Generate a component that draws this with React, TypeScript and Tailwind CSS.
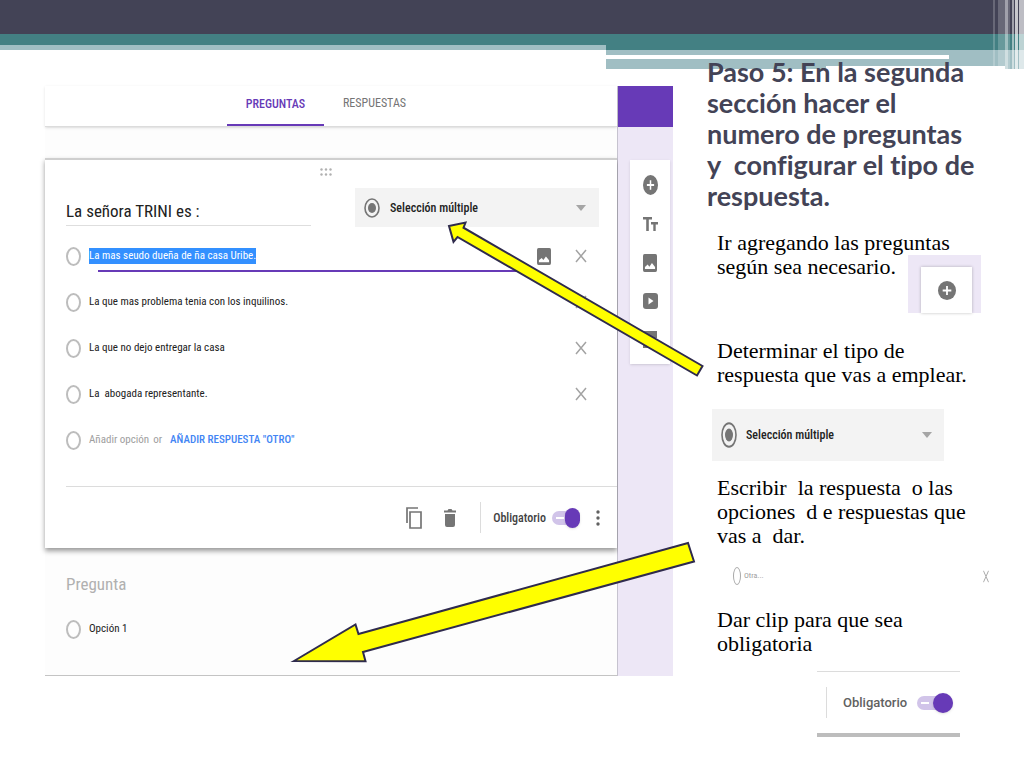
import React, { useState } from "react";

const condensed = "font-['Roboto_Condensed','Liberation_Sans_Narrow',Roboto,sans-serif]";
const serif = "font-['Liberation_Serif',serif]";

function PlusIcon({ className }: { className: string }) {
  return (
    <svg viewBox="0 0 20 20" preserveAspectRatio="none" className={className} aria-hidden="true">
      <ellipse cx="10" cy="10" rx="10" ry="10" fill="#757575" />
      <path d="M10 5.2v9.6M5.2 10h9.6" stroke="#fff" strokeWidth="2" />
    </svg>
  );
}

function ImageIcon({ className }: { className: string }) {
  return (
    <svg viewBox="0 0 18 18" preserveAspectRatio="none" className={className} aria-hidden="true">
      <rect width="18" height="18" rx="2" fill="#757575" />
      <path d="M2.500 15v-2L6 10.500l2.200 2.200L11.500 9l4 4v2z" fill="#fff" />
    </svg>
  );
}

function CrossIcon({ className }: { className: string }) {
  return (
    <svg viewBox="0 0 12 14" preserveAspectRatio="none" className={className} aria-hidden="true">
      <path d="M1 1l10 12M11 1L1 13" stroke="#a3a3a3" strokeWidth="1.5" fill="none" />
    </svg>
  );
}

function RadioMark({ className }: { className: string }) {
  return (
    <svg viewBox="0 0 16 20" preserveAspectRatio="none" className={className} aria-hidden="true">
      <ellipse cx="8" cy="10" rx="7" ry="9" fill="none" stroke="#757575" strokeWidth="1.6" />
      <ellipse cx="8" cy="10" rx="4" ry="5" fill="#757575" />
    </svg>
  );
}

function TypeSelect({ id, className, markClass }: { id: string; className: string; markClass: string }) {
  return (
    <div className={`relative flex items-center bg-[#f3f3f3] ${className}`}>
      <RadioMark className={`w-4 shrink-0 ${markClass}`} />
      <select
        id={id}
        aria-label="Tipo de respuesta"
        className={`h-full min-w-0 flex-1 appearance-none bg-transparent text-[12px] font-medium text-[#212121] outline-none ${condensed}`}
      >
        <option>Selección múltiple</option>
      </select>
      <svg viewBox="0 0 10 6" className="pointer-events-none h-[6px] w-[10px] shrink-0" aria-hidden="true">
        <path d="M0 0h10L5 6z" fill="#a5a5a5" />
      </svg>
    </div>
  );
}

function Toggle({ id, large = false }: { id: string; large?: boolean }) {
  const [on, setOn] = useState(true);
  return (
    <span className={`relative inline-flex h-5 items-center ${large ? "w-9" : "w-7"}`}>
      <input id={id} type="checkbox" role="switch" checked={on} onChange={() => setOn(!on)} className="peer h-[14px] w-full appearance-none rounded-full bg-[#d1c4e9]" />
      <span className="pointer-events-none absolute left-1 h-[2px] w-2 bg-white" />
      <span className={`pointer-events-none absolute left-0 rounded-full bg-[#673ab7] shadow-sm peer-checked:right-0 peer-checked:left-auto ${large ? "size-5" : "h-5 w-[15px]"}`} />
    </span>
  );
}

function Circle() {
  return <input type="radio" name="opcion" aria-label="Opción" className="h-[19px] w-[15px] shrink-0 appearance-none rounded-[50%] border-2 border-[#bdbdbd]" />;
}

function Header() {
  return (
    <header className="relative">
      <div className="h-[34px] bg-[#434356]" />
      <div className="flex">
        <div className="w-[59.2%]">
          <div className="h-[11px] bg-[#438083]" />
          <div className="h-[5px] bg-[#a0bec3]" />
        </div>
        <div className="flex-1">
          <div className="h-4 bg-[#438083]" />
          <div className="h-[5px] bg-[#a0bec3]" />
          <div className="h-1 bg-[#a0bec3] pr-[18%]"><div className="h-full bg-white" /></div>
          <div className="h-[7px] bg-[#a0bec3]" />
          <div className="flex h-[3px] justify-between">
            <div className="w-[52.6%] bg-[#a0bec3]" />
            <div className="w-[19px] bg-[#a0bec3]" />
          </div>
        </div>
      </div>
      <div className="absolute top-0 right-0 flex h-[69px] w-[31px]">
        <div className="h-[66px] w-[2px] bg-white/20" />
        <div className="w-[3px]" />
        <div className="h-[66px] w-[7px] bg-white/20" />
        <div className="w-[3px] bg-white/50" />
        <div className="w-[2px] bg-white/20" />
        <div className="w-[2px]" />
        <div className="w-[2px] bg-white/50" />
        <div className="w-[1px]" />
        <div className="w-[3px] bg-white/70" />
        <div className="w-[1px]" />
        <div className="w-[5px] bg-white/65" />
      </div>
    </header>
  );
}

const options = [
  { text: "La mas seudo dueña de ña casa Uribe.", selected: true },
  { text: "La que mas problema tenia con los inquilinos.", selected: false },
  { text: "La que no dejo entregar la casa", selected: false },
  { text: "La  abogada representante.", selected: false },
];

function FormEditor() {
  return (
    <section className={`flex h-[590px] min-w-0 ${condensed}`}>
      <div className="flex min-w-0 flex-1 flex-col border-r border-[#c6c3cf] bg-[#fdfdfd]">
        <nav className="flex h-[41px] shrink-0 items-stretch gap-[2px] border-b border-[#dcdcdc] bg-white pl-[182px] text-[12px] shadow-sm">
          <button className="w-[97px] border-b-2 border-[#673ab7] pb-[2px] font-medium text-[#673ab7]">PREGUNTAS</button>
          <button className="w-[97px] pb-[6px] text-[#757575]">RESPUESTAS</button>
        </nav>
        <article className="mt-[31px] flex h-[390px] shrink-0 flex-col border-t-2 border-[#cfcfcf] bg-white shadow-[0_3px_5px_rgba(0,0,0,0.4)]">
          <svg viewBox="0 0 12 8" className="mt-2 ml-[275px] h-2 w-3" aria-hidden="true">
            {[1.5, 6, 10.5].map((x) => [1.5, 6.5].map((y) => <circle key={`${x}-${y}`} cx={x} cy={y} r="1.2" fill="#b0b0b0" />))}
          </svg>
          <div className="mt-3 flex justify-between pr-[18px] pl-[21px]">
            <input aria-label="Pregunta" defaultValue="La señora TRINI es :" className="h-[38px] w-[245px] border-b border-[#dedede] bg-transparent pt-2 text-[17px] text-[#212121] outline-none" />
            <TypeSelect id="tipo" className="h-[39px] w-[244px] gap-[10px] pr-[13px] pl-[9px]" markClass="h-5" />
          </div>
          <ul className="mt-[6px] pl-[21px] text-[11px] text-[#212121]">
            {options.map((o) => (
              <li key={o.text} className="flex h-[46px] items-center">
                <Circle />
                <div className="relative ml-2 flex h-8 flex-1 items-center whitespace-pre">
                  <span className={o.selected ? "bg-[#3390ff] text-white" : ""}>{o.text}</span>
                  {o.selected && <span className="absolute right-[8px] bottom-0 left-[9px] h-[2px] bg-[#673ab7]" />}
                </div>
                <span className="flex w-[88px] items-center justify-end gap-6 pr-[30px]">
                  {o.selected && <button aria-label="Imagen"><ImageIcon className="h-[17px] w-[14px]" /></button>}
                  <button aria-label="Quitar"><CrossIcon className="h-[14px] w-3" /></button>
                </span>
              </li>
            ))}
            <li className="flex h-[46px] items-center text-[#9e9e9e]">
              <Circle />
              <span className="ml-2">Añadir opción</span>
              <span className="ml-1">or</span>
              <a href="#otro" className="ml-2 font-medium text-[#4285f4]">AÑADIR RESPUESTA "OTRO"</a>
            </li>
          </ul>
          <footer className="mt-auto ml-[21px] flex h-[62px] items-center justify-end border-t border-[#dcdcdc] pr-[17px]">
            <button aria-label="Duplicar" className="mr-[22px]">
              <svg viewBox="0 0 16 22" className="h-[22px] w-4" fill="none" stroke="#757575" strokeWidth="1.7" aria-hidden="true">
                <path d="M1 16V1h11M4 5h11v16H4z" />
              </svg>
            </button>
            <button aria-label="Eliminar" className="mr-6">
              <svg viewBox="0 0 12 18" className="h-[18px] w-3" fill="#757575" aria-hidden="true">
                <path d="M1 5h10v11q0 2-2 2H3q-2 0-2-2zM0 1.500h3.500L4.500 0h3l1 1.500H12v2H0z" />
              </svg>
            </button>
            <span className="h-[31px] border-l border-[#dcdcdc]" />
            <label htmlFor="obligatorio" className="mr-[6px] ml-3 text-[12px] font-medium text-[#424242]">Obligatorio</label>
            <Toggle id="obligatorio" />
            <button aria-label="Más" className="ml-4">
              <svg viewBox="0 0 4 16" className="h-4 w-1" fill="#616161" aria-hidden="true">
                <circle cx="2" cy="2" r="1.700" /><circle cx="2" cy="8" r="1.700" /><circle cx="2" cy="14" r="1.700" />
              </svg>
            </button>
          </footer>
        </article>
        <article className="flex flex-1 flex-col border-b border-[#c4c4c4] pl-[21px]">
          <h2 className="mt-6 text-[17px] leading-6 text-[#b0b0b0]">Pregunta</h2>
          <label className="mt-6 flex items-center gap-2 text-[11px] text-[#212121]"><Circle />Opción 1</label>
        </article>
      </div>
      <aside className="w-[55px] shrink-0 bg-[#ede7f6] pl-3">
        <div className="-ml-3 h-[41px] bg-[#673ab7]" />
        <div className="mt-[33px] flex h-[204px] w-10 flex-col items-center bg-white pt-[15px] shadow">
          <button aria-label="Añadir pregunta" className="flex h-[38px] items-start"><PlusIcon className="h-5 w-[15px]" /></button>
          <button aria-label="Añadir título" className="flex h-[38px] items-start pt-1">
            <svg viewBox="0 0 15 15" className="h-[15px] w-[15px]" fill="#757575" aria-hidden="true"><path d="M0 0h9v2.600H5.800V14H3.200V2.600H0zM8 5h7v2.400h-2.300V14h-2.400V7.400H8z" /></svg>
          </button>
          <button aria-label="Añadir imagen" className="flex h-[38px] items-start pt-[3px]"><ImageIcon className="h-[18px] w-[14px]" /></button>
          <button aria-label="Añadir vídeo" className="flex h-[38px] items-start pt-1">
            <svg viewBox="0 0 15 16" className="h-4 w-[15px]" aria-hidden="true"><rect width="15" height="16" rx="3" fill="#757575" /><path d="M5.500 4.500v7L10.500 8z" fill="#fff" /></svg>
          </button>
          <button aria-label="Añadir sección" className="flex flex-1 items-start pt-1">
            <svg viewBox="0 0 14 18" className="h-[18px] w-[14px]" fill="#757575" aria-hidden="true"><path d="M0 0h14v7H0zM0 10h14v7H0z" /></svg>
          </button>
        </div>
      </aside>
    </section>
  );
}

function Instructions() {
  return (
    <section className={`flex min-w-0 flex-col pl-[10px] text-[22px] leading-6 text-black ${serif}`}>
      <h1 className="-ml-[10px] font-['Lato',sans-serif] text-[27px] leading-[31px] font-bold whitespace-pre text-[#434356] [font-variant-ligatures:none]">
        {"Paso 5: En la segunda\nsección hacer el\nnumero de preguntas\ny  configurar el tipo de\nrespuesta."}
      </h1>
      <div className="relative mt-5 h-[84px]">
        <p className="whitespace-pre">{"Ir agregando las preguntas\nsegún sea necesario."}</p>
        <div className="absolute top-6 left-[191px] h-[58px] w-[73px] bg-[#ede7f6] pt-3 pr-[9px] pl-[13px]">
          <div className="flex h-full items-center justify-center bg-white shadow-[0_0_3px_rgba(0,0,0,0.25)]"><PlusIcon className="h-[19px] w-[18px]" /></div>
        </div>
      </div>
      <p className="mt-6 whitespace-pre">{"Determinar el tipo de\nrespuesta que vas a emplear."}</p>
      <TypeSelect id="tipo-muestra" className="mt-[22px] -ml-[5px] h-[52px] w-[232px] gap-[9px] pr-3 pl-[9px]" markClass="h-[26px]" />
      <p className="mt-[15px] whitespace-pre">{"Escribir  la respuesta  o las\nopciones  d e respuestas que\nvas a  dar."}</p>
      <div className="mt-[18px] flex h-5 w-[272px] items-center pl-4">
        <input type="radio" aria-label="Otra" className="h-[18px] w-2 appearance-none rounded-[50%] border border-[#a9a9a9]" />
        <span className={`ml-[3px] text-[8px] text-[#9e9e9e] ${condensed}`}>Otra...</span>
        <CrossIcon className="ml-auto h-[13px] w-[6px]" />
      </div>
      <p className="mt-[22px] whitespace-pre">{"Dar clip para que sea\nobligatoria"}</p>
      <div className="mt-[15px] ml-[100px] flex h-[66px] w-[143px] items-center border-t border-b-4 border-t-[#dcdcdc] border-b-[#bdbdbd] pl-[9px]">
        <span className="h-[31px] border-l border-[#dcdcdc]" />
        <label htmlFor="obligatorio-muestra" className="mr-[10px] ml-4 font-['Roboto',sans-serif] text-[13px] font-medium text-[#616161]">Obligatorio</label>
        <Toggle id="obligatorio-muestra" large />
      </div>
    </section>
  );
}

export default function App() {
  return (
    <div className="relative min-h-screen overflow-hidden bg-white">
      <Header />
      <main className="relative -mt-[13px] grid grid-cols-[628fr_317fr] gap-[34px] pl-[45px]">
        <div className="pt-[30px]"><FormEditor /></div>
        <Instructions />
      </main>
      <svg viewBox="0 0 1024 768" className="pointer-events-none absolute top-0 left-0 h-auto w-full" fill="#ffff00" stroke="#2f2b4d" strokeWidth="2" aria-hidden="true">
        <path d="M449 226l16.500-3.500-2 5.200L702.500 366l-5.500 9.500L457.500 237l-4 4.800z" />
        <path d="M294 661l61.500-36.500 3 9.500L688 543l6 18.500L363 652l2.500 9.200z" />
      </svg>
    </div>
  );
}
